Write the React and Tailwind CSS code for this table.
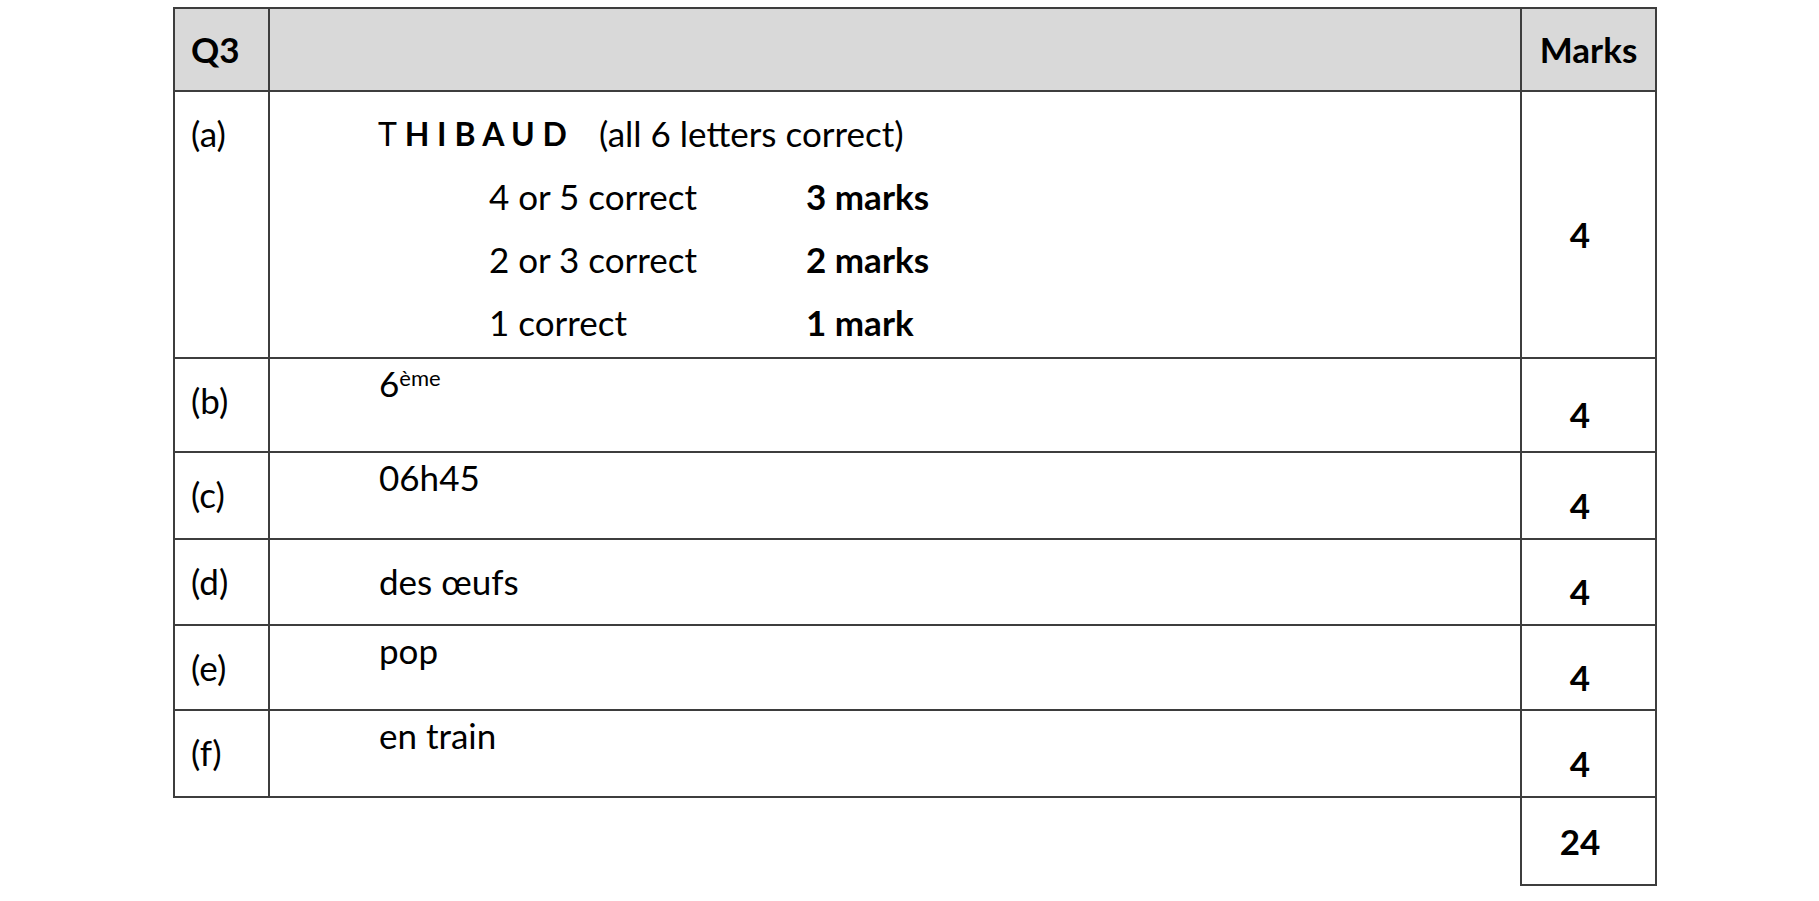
import React from "react";

const rows = [
  { label: "(b)", answer: <>6<sup className="text-[22px]">ème</sup></>, h: "h-[94px]", pt: "pt-[2px]" },
  { label: "(c)", answer: "06h45", h: "h-[87px]", pt: "pt-[2px]" },
  { label: "(d)", answer: "des œufs", h: "h-[86px]", pt: "pt-[19px]" },
  { label: "(e)", answer: "pop", h: "h-[85px]", pt: "pt-[2px]" },
  { label: "(f)", answer: "en train", h: "h-[87px]", pt: "pt-[2px]" },
];

const partial = [
  { text: "4 or 5 correct", marks: "3 marks" },
  { text: "2 or 3 correct", marks: "2 marks" },
  { text: "1 correct", marks: "1 mark" },
];

export default function App() {
  return (
    <div
      className="min-h-screen bg-white pl-[173px] pt-[7px] text-black text-[35px]"
      style={{ fontFamily: "Lato, 'Open Sans', sans-serif" }}
    >
      <div className="w-[1484px]">
        {/* header */}
        <div className="flex h-[85px] bg-[#d9d9d9]">
          <div className="w-[97px] border-2 border-[#3d3d3d] flex items-center pl-[16px] font-bold">
            Q3
          </div>
          <div className="w-[1252px] border-y-2 border-r-2 border-[#3d3d3d]"></div>
          <div className="w-[135px] border-y-2 border-r-2 border-[#3d3d3d] flex items-center justify-center font-bold">
            Marks
          </div>
        </div>

        {/* (a) */}
        <div className="flex h-[267px]">
          <div className="w-[97px] border-l-2 border-r-2 border-b-2 border-[#3d3d3d] pl-[16px] pt-[19px] leading-[44px]">
            (a)
          </div>
          <div className="w-[1252px] border-r-2 border-b-2 border-[#3d3d3d] pl-[108px] pt-[10px] leading-[63px]">
            <div className="flex">
              <span className="w-[221px] text-[32px]">
                T<span className="font-bold"> H I B A U D</span>
              </span>
              <span>(all 6 letters correct)</span>
            </div>
            {partial.map((p) => (
              <div className="flex pl-[111px]" key={p.text}>
                <span className="w-[317px]">{p.text}</span>
                <span className="font-bold">{p.marks}</span>
              </div>
            ))}
          </div>
          <div className="w-[135px] border-r-2 border-b-2 border-[#3d3d3d] flex items-center justify-center pt-[19px] pr-[17px] font-bold">
            4
          </div>
        </div>

        {rows.map((r) => (
          <div className={`flex ${r.h}`} key={r.label}>
            <div className="w-[97px] border-l-2 border-r-2 border-b-2 border-[#3d3d3d] pl-[16px] pt-[19px] leading-[44px]">
              {r.label}
            </div>
            <div className={`w-[1252px] border-r-2 border-b-2 border-[#3d3d3d] pl-[109px] leading-[44px] ${r.pt}`}>
              {r.answer}
            </div>
            <div className="w-[135px] border-r-2 border-b-2 border-[#3d3d3d] flex items-center justify-center pt-[19px] pr-[17px] font-bold">
              4
            </div>
          </div>
        ))}

        {/* total */}
        <div className="flex h-[88px] pl-[1347px]">
          <div className="w-[137px] border-l-2 border-r-2 border-b-2 border-[#3d3d3d] flex items-center justify-center pr-[17px] font-bold">
            24
          </div>
        </div>
      </div>
    </div>
  );
}
